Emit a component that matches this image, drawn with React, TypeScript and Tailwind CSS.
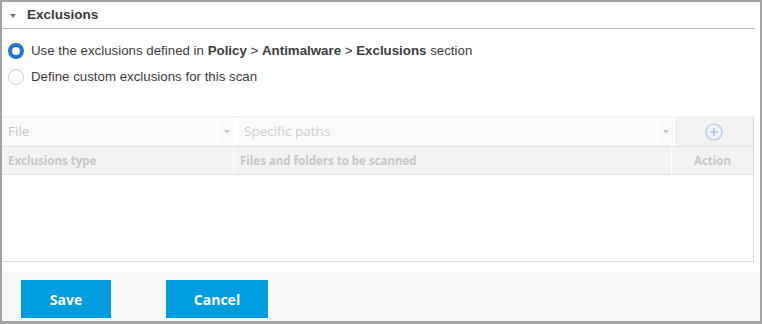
import React from "react";

function Radio({ checked }: { checked?: boolean }) {
  return checked ? (
    <span className="w-[16px] h-[16px] rounded-full border-[4px] border-[#1f74d4] bg-white shrink-0" />
  ) : (
    <span className="w-[16px] h-[16px] rounded-full border border-[#cfcfcf] bg-white shrink-0" />
  );
}

function Caret({ className = "" }: { className?: string }) {
  return (
    <svg width="6" height="4" viewBox="0 0 6 4" className={className}>
      <path d="M0 0 L6 0 L3 4 Z" fill="currentColor" />
    </svg>
  );
}

export default function App() {
  return (
    <div
      className="w-[762px] h-[324px] border-t-2 border-l-2 border-r-2 border-b-[3px] border-[#a3a3a3] bg-white flex flex-col text-[#333]"
      style={{ fontFamily: '"Liberation Sans", Arial, sans-serif' }}
    >
      <div className="mr-[6px] h-[27px] border-b border-[#b5b5b5] flex items-center">
        <Caret className="ml-[8px] text-[#777] mt-[1px]" />
        <span className="ml-[11px] text-[13.5px] font-bold text-[#3a3a3a]">Exclusions</span>
      </div>

      <div className="flex flex-col gap-[10px] mt-[14px] pl-[6px] text-[13.3px] text-[#3c3c3c]">
        <label className="flex items-center gap-[7px] h-[16px]">
          <Radio checked />
          <span>
            Use the exclusions defined in <b>Policy</b> &gt; <b>Antimalware</b> &gt; <b>Exclusions</b> section
          </span>
        </label>
        <label className="flex items-center gap-[7px] h-[16px]">
          <Radio />
          <span>Define custom exclusions for this scan</span>
        </label>
      </div>

      <div
        className="mt-[31px] mr-[6px] flex flex-col border-b border-r border-[#d9d9d9] h-[146px]"
        style={{ fontFamily: '"Open Sans", sans-serif' }}
      >
        <div className="h-[30px] flex border-t border-[#f0f0f0] gap-[2px]">
          <div className="w-[215px] bg-[#fafafa] flex items-center pl-[6px] text-[13.5px] text-[#c4c4c4]">File</div>
          <div className="w-[15px] bg-[#fafafa] flex items-center justify-center text-[#c8c8c8]">
            <Caret />
          </div>
          <div className="w-[420px] ml-[1px] bg-[#fafafa] flex items-center pl-[7px] text-[13.5px] text-[#d0d0d0]">
            Specific paths
          </div>
          <div className="w-[14px] bg-[#fafafa] flex items-center justify-center text-[#c8c8c8]">
            <Caret />
          </div>
          <div className="flex-1 bg-[#f2f2f2] flex items-center justify-center">
            <svg width="18" height="18" viewBox="0 0 18 18">
              <circle cx="9" cy="9" r="8" fill="none" stroke="#a9c6ee" strokeWidth="1.2" />
              <path d="M9 5 V13 M5 9 H13" stroke="#a9c6ee" strokeWidth="1.6" />
            </svg>
          </div>
        </div>
        <div className="h-[29px] flex bg-[#f3f3f3] border-t border-b border-[#e0e0e0] text-[11.5px] font-bold text-[#c6c6c6]">
          <div className="w-[232px] flex items-center pl-[6px] border-r border-white">Exclusions type</div>
          <div className="flex-1 flex items-center pl-[6px] border-r border-white">Files and folders to be scanned</div>
          <div className="w-[81px] flex items-center justify-center">Action</div>
        </div>
        <div className="flex-1 bg-white" />
      </div>

      <div className="mt-[10px] flex-1 bg-[#f7f7f7] flex items-start pt-[8px] pl-[19px] gap-[55px]" style={{ fontFamily: '"Open Sans", sans-serif' }}>
        <button className="w-[90px] h-[38px] bg-[#009de0] text-white text-[14px] font-bold">Save</button>
        <button className="w-[102px] h-[38px] bg-[#009de0] text-white text-[14px] font-bold">Cancel</button>
      </div>
    </div>
  );
}
